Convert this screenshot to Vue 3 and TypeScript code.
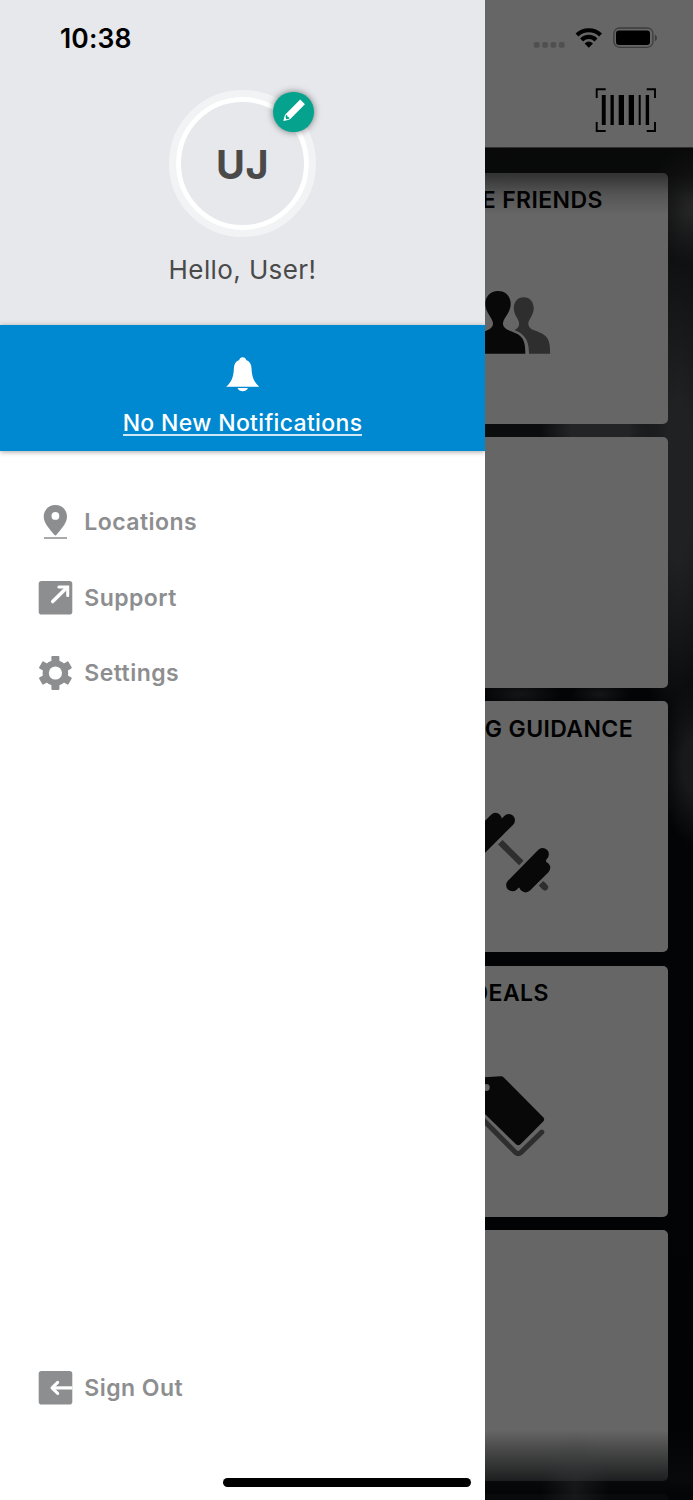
<script setup lang="ts">
interface Tile {
  title: string
  icon: 'friends' | 'dumbbell' | 'tag' | ''
}

interface MenuItem {
  label: string
  icon: 'pin' | 'external' | 'gear'
}

const tiles: Tile[] = [
  { title: 'INVITE FRIENDS', icon: 'friends' },
  { title: '', icon: '' },
  { title: 'TRAINING GUIDANCE', icon: 'dumbbell' },
  { title: 'DEALS', icon: 'tag' },
  { title: '', icon: '' },
  { title: '', icon: '' },
]

const menu: MenuItem[] = [
  { label: 'Locations', icon: 'pin' },
  { label: 'Support', icon: 'external' },
  { label: 'Settings', icon: 'gear' },
]
</script>

<template>
  <div class="screen">
    <div class="home">
      <header class="topbar">
        <div class="status">
          <svg width="124" height="24" viewBox="533 26 124 24">
            <g fill="#505050">
              <rect x="533.8" y="42" width="5.8" height="5.8" rx="2" />
              <rect x="542.2" y="42" width="5.8" height="5.8" rx="2" />
              <rect x="550.5" y="42" width="5.8" height="5.8" rx="2" />
              <rect x="558.9" y="42" width="5.8" height="5.8" rx="2" />
            </g>
            <g fill="none" stroke="#000" stroke-width="4.200">
              <path d="M577 35 A17 17 0 0 1 600.6 35" />
              <path d="M581.6 39.9 A10.3 10.3 0 0 1 596 39.9" />
            </g>
            <path d="M584.6 43.4 Q588.8 39.600 593 43.4 L588.8 47.7Z" fill="#000" />
            <rect x="613.9" y="28" width="39" height="19.3" rx="5.6" fill="none" stroke="#3d3d3d" stroke-width="1.3" />
            <rect x="616" y="30.6" width="34" height="14.3" rx="3" fill="#000" />
            <path d="M654.9 34.4 Q657 35.5 657 37.8 Q657 40.2 654.9 41.3Z" fill="#3d3d3d" />
          </svg>
        </div>
        <svg class="barcode" width="62" height="46" viewBox="595.300 87 62 46">
          <path d="M606 89.3H597V98M647 89.3h8.3V98M606 131H597v-9M647 131h8.3v-9" fill="none" stroke="#000" stroke-width="1.9" />
          <path d="M602.1 95h3.9v30h-3.9zM610.8 95h3.3v30h-3.3zM619 95h5.3v30H619zM629 95h5.3v30H629zM639 95h2v30h-2zM646 95h3.4v30H646z" fill="#000" />
        </svg>
      </header>

      <main class="tiles">
        <section v-for="(tile, i) in tiles" :key="i" class="tile">
          <h2 v-if="tile.title">{{ tile.title }}</h2>
          <svg v-if="tile.icon === 'friends'" class="glyph" width="315" height="251" viewBox="353 172.9 315 251">
            <path fill="#2e2e2e" d="M523.7 297.2c6.2 0 10 4.8 10 11 0 7-5.4 11.500-5.400 15.400 0 2.900 2 5 5.200 6.400 5.500 2.300 11 3.700 14 8.400 2.300 3.800 2.600 9 2.600 15.200H529c0-8-1.300-13.500-5.300-17.800-2.400-2.700-5.600-4.300-9.300-5.800 3.100-1.500 4.800-3.500 4.800-6.400 0-4-5.400-8.400-5.400-15.400 0-6.200 3.700-11 9.900-11z" />
            <path fill="#080808" d="M498 291c7.900 0 12.700 5.600 12.700 13 0 8.500-7.700 14.500-7.700 19.500 0 3.500 3 5.700 6.700 7.200 6 2.400 10.400 3.800 13 8.300 2.200 3.700 2.600 8.800 2.600 14.700H470.700c0-5.900.4-11 2.600-14.700 2.600-4.500 7-5.900 13-8.300 3.700-1.500 6.700-3.700 6.700-7.200 0-5-7.700-11-7.700-19.500 0-7.400 4.800-13 12.700-13z" />
          </svg>
          <svg v-else-if="tile.icon === 'dumbbell'" class="glyph" width="315" height="251" viewBox="353 701.4 315 251">
            <g fill="none" stroke="#2e2e2e" stroke-width="6.300">
              <path d="M500.3 842.6L521.3 863.4" />
              <path d="M541 883.7L544.300 887" />
              <path d="M543.500 886.200L545 887.700" stroke-linecap="round" />
            </g>
            <g fill="none" stroke="#080808" stroke-width="12.500" stroke-linecap="round">
              <path d="M508.700 820.700L476 853.500M495.500 819.500L470 845" />
              <path d="M512.400 885.500L542.600 854.700M525.600 886.600L544 868.200M519 882L540 861" />
            </g>
          </svg>
          <svg v-else-if="tile.icon === 'tag'" class="glyph" width="315" height="251" viewBox="353 965.8 315 251">
            <path d="M477 1110.500L515.500 1149.500Q518.300 1152 521 1149.500L541.800 1129.200" fill="none" stroke="#2e2e2e" stroke-width="5" stroke-linecap="round" transform="translate(0 2.700)" />
            <path d="M477 1077.500L500.500 1076.100Q502.500 1076 504 1077.500L543.200 1117Q545 1119.200 543.200 1121.300L520.500 1144.100Q518.300 1146 516 1144.100L477 1106Z" fill="#080808" />
            <circle cx="486.300" cy="1087.300" r="3.400" fill="#666" />
          </svg>
        </section>
      </main>
      <div class="shade shade-top"></div>
      <div class="shade shade-bottom"></div>
    </div>

    <aside class="drawer">
      <header class="profile">
        <time>10:38</time>
        <div class="avatar">
          <span>UJ</span>
          <button class="edit" aria-label="Edit profile">
            <svg width="40" height="40" viewBox="0 0 40 40">
              <path fill="#fff" d="M27.200 7.600L31.900 12.300 17.300 26.900Q16 27.900 10.400 28.900 11.400 23.400 12.600 22.200Z" />
              <path fill="#05a38e" d="M13 22.800Q14.300 22.900 14.600 24.700 16.300 24.800 16.500 26.500 15 27.300 13.200 27.200 11.900 26 13 22.800Z" />
            </svg>
          </button>
        </div>
        <p class="hello">Hello, User!</p>
      </header>

      <section class="notice">
        <svg width="34" height="35" viewBox="226 356.600 34 35" fill="#fff">
          <path d="M242.700 356.900C244.600 356.900 245.900 358.100 246.200 359.600 249.700 361 251.300 363.600 251.500 367.800 251.800 376.400 253.800 381.500 259.200 386.300H226.200C231.600 381.500 233.600 376.400 233.900 367.800 234.100 363.600 235.700 361 239.200 359.600 239.500 358.100 240.800 356.900 242.700 356.900Z" />
          <path d="M237.500 387.600H248Q246.300 390.800 242.700 390.800 239.200 390.800 237.500 387.600Z" />
        </svg>
        <a>No New Notifications</a>
      </section>

      <nav class="menu">
        <div v-for="item in menu" :key="item.label" class="row">
          <svg v-if="item.icon === 'pin'" width="35" height="34" viewBox="-.7 0 35 34">
            <path fill="#8d8e90" fill-rule="evenodd" d="M16.700.1C23.200.1 28.300 5 28.300 11.400 28.300 18.500 21.500 25 17.800 29.800Q16.700 31 15.600 29.800C11.900 25 5 18.500 5 11.400 5 5 10.200.1 16.700.1ZM16.700 7a3.900 3.900 0 1 0 0 7.800 3.900 3.900 0 0 0 0-7.800Z" />
            <path d="M5.200 33H28.300" stroke="#8d8e90" stroke-width="1.500" />
          </svg>
          <svg v-else-if="item.icon === 'external'" width="35" height="34" viewBox="-.7 0 35 34">
            <rect width="33.600" height="33.600" rx="2.800" fill="#8d8e90" />
            <path d="M14 20.600L28 6.800" stroke="#fff" stroke-width="3.500" stroke-linecap="round" />
            <path d="M20.200 6H29V14.600" fill="none" stroke="#fff" stroke-width="3" stroke-linecap="round" />
          </svg>
          <svg v-else width="35" height="34" viewBox="-17.400 -17 35 34">
            <g fill="#8d8e90">
              <rect v-for="a in [0, 60, 120]" :key="a" x="-4" y="-16.900" width="8" height="33.800" rx=".8" :transform="`rotate(${a})`" />
            </g>
            <circle r="9.700" fill="none" stroke="#8d8e90" stroke-width="6.200" />
            <circle r="6.600" fill="#fff" />
          </svg>
          <span>{{ item.label }}</span>
        </div>
      </nav>

      <div class="row signout">
        <svg width="35" height="34" viewBox="-.7 0 35 34">
          <rect width="33.600" height="33.600" rx="2.800" fill="#8d8e90" />
          <path d="M33.600 16.900H14" stroke="#fff" stroke-width="3.200" />
          <path d="M19 11.400L13.300 16.900 19 22.400" fill="none" stroke="#fff" stroke-width="3" stroke-linecap="round" stroke-linejoin="round" />
        </svg>
        <span>Sign Out</span>
      </div>
    </aside>

    <div class="home-indicator"></div>
  </div>
</template>

<style>
body {
  margin: 0;
}
</style>

<style scoped>
.screen {
  position: relative;
  width: 693px;
  height: 1500px;
  overflow: hidden;
  font-family: Inter, "Liberation Sans", sans-serif;
}

.home {
  position: relative;
  height: 1500px;
  overflow: hidden;
  background:
    radial-gradient(ellipse 45px 60px at 693px 205px, #29292a, transparent),
    radial-gradient(ellipse 50px 260px at 678px 480px, #202122 30%, transparent),
    radial-gradient(ellipse 60px 30px at 600px 430px, #222425 50%, transparent),
    radial-gradient(ellipse 32px 80px at 692px 765px, #17191a 30%, transparent),
    radial-gradient(ellipse 40px 14px at 520px 694px, #131516, transparent),
    radial-gradient(ellipse 30px 12px at 600px 694px, #131516, transparent),
    linear-gradient(#090a0a, #0c0d0e 500px, #020405 700px, #010304);
}

.topbar {
  box-sizing: border-box;
  height: 147.500px;
  padding: 26px 36px 0 0;
  display: flex;
  flex-direction: column;
  align-items: flex-end;
  gap: 37px;
  background: #666;
}

.topbar svg {
  display: block;
}

.tiles {
  display: flex;
  flex-direction: column;
  align-items: flex-end;
  gap: 13.400px;
  padding: 25px 25.300px 0 0;
}

.tile {
  position: relative;
  flex: none;
  width: 315px;
  height: 251px;
  border-radius: 5px;
  background: #666;
}

.tile h2 {
  margin: 0;
  padding-top: 12.300px;
  font-size: 23px;
  line-height: 30px;
  font-weight: 600;
  text-align: center;
  white-space: nowrap;
  color: #000;
  letter-spacing: 0.400px;
}

.glyph {
  position: absolute;
  inset: 0;
}

.shade {
  position: absolute;
  left: 0;
  right: 0;
}

.shade-top {
  top: 147px;
  height: 68px;
  background: linear-gradient(rgba(8, 8, 8, 0.600), rgba(8, 8, 8, 0.540) 40%, rgba(8, 8, 8, 0.180) 70%, transparent);
}

.shade-bottom {
  top: 1430px;
  height: 70px;
  background:
    radial-gradient(ellipse 34px 60px at 575px 60px, rgba(60, 62, 63, 0.300), transparent),
    linear-gradient(transparent, rgba(10, 11, 12, 0.340) 30%, rgba(10, 11, 12, 0.780) 72%, rgba(4, 5, 6, 0.950) 90%);
}

.drawer {
  position: absolute;
  inset: 0 auto 0 0;
  width: 485px;
  display: flex;
  flex-direction: column;
  overflow: hidden;
  background: #fff;
}

.profile {
  flex: none;
  height: 325.300px;
  display: flex;
  flex-direction: column;
  align-items: center;
  background: #e7e8ec;
  color: #4a4a4a;
}

.profile time {
  align-self: flex-start;
  margin: 22px 0 0 60px;
  height: 68px;
  font-size: 26.500px;
  line-height: 32px;
  font-weight: 600;
  letter-spacing: 0.100px;
  color: #000;
}

.avatar {
  position: relative;
  box-sizing: border-box;
  width: 147.400px;
  height: 147.400px;
  border: 7px solid #f2f3f5;
  border-radius: 50%;
  display: flex;
}

.avatar > span {
  box-sizing: border-box;
  flex: 1;
  padding-top: 2px;
  border: 5px solid #fff;
  border-radius: 50%;
  display: flex;
  align-items: center;
  justify-content: center;
  font-size: 39.500px;
  font-weight: 700;
  letter-spacing: 0.600px;
}

.edit {
  position: absolute;
  top: -5px;
  right: -4.500px;
  width: 40.400px;
  height: 40.400px;
  padding: 0;
  border: 0;
  border-radius: 50%;
  background: #05a38e;
  box-shadow: 0 0 7px rgba(0, 0, 0, 0.500);
}

.edit svg {
  display: block;
}

.hello {
  margin: 17px 0 0;
  font-size: 26px;
  line-height: 32px;
  letter-spacing: 0.400px;
}

.notice {
  position: relative;
  flex: none;
  box-sizing: border-box;
  height: 125.700px;
  padding-top: 31.700px;
  display: flex;
  flex-direction: column;
  align-items: center;
  background: #0089d1;
  color: #fff;
  box-shadow: 0 1px 5px rgba(0, 0, 0, 0.350);
}

.notice svg {
  display: block;
}

.notice a {
  margin-top: 18px;
  height: 24.500px;
  font-size: 23px;
  line-height: 27px;
  font-weight: 500;
  letter-spacing: 0.340px;
  border-bottom: 2px solid #cfe8f6;
}

.menu {
  padding-top: 33.500px;
}

.row {
  display: flex;
  align-items: center;
  gap: 11.300px;
  height: 75.400px;
  padding-left: 38px;
  font-size: 23px;
  font-weight: 580;
  letter-spacing: 0.450px;
  color: #8d8e90;
}

.row svg {
  flex: none;
}

.signout {
  margin-top: auto;
  margin-bottom: 74.500px;
}

.home-indicator {
  position: absolute;
  left: 222.500px;
  bottom: 13.500px;
  width: 248px;
  height: 8.500px;
  border-radius: 5px;
  background: #000;
}
</style>
